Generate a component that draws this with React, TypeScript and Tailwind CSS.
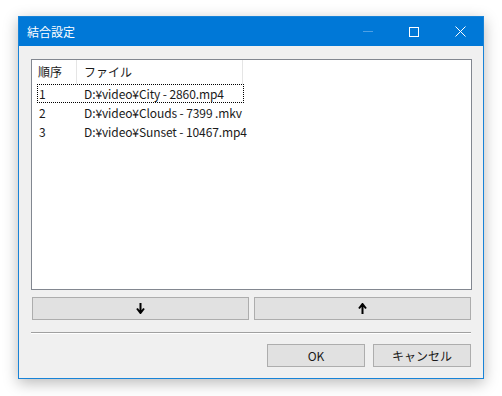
const rows = [
  { no: "1", file: "D:¥video¥City - 2860.mp4" },
  { no: "2", file: "D:¥video¥Clouds - 7399 .mkv" },
  { no: "3", file: "D:¥video¥Sunset - 10467.mp4" },
];

const font = { fontFamily: '"Noto Sans CJK JP", "Noto Sans", sans-serif' };

export default function App() {
  return (
    <div className="h-[396px] w-[502px] bg-white pl-[18px] pt-[16px] text-[12px] text-[#1a1a1a]" style={font}>
      <div className="flex h-[363px] w-[466px] flex-col border border-[#1883d7] bg-[#f0f0f0] shadow-[0_4px_14px_rgba(0,0,0,0.28)]">
        {/* title bar */}
        <div className="flex h-[29px] items-center bg-[#0078d7] pl-[8px] text-white">
          <span className="text-[12px]">結合設定</span>
          <div className="ml-auto flex h-full items-center">
            <div className="flex w-[46px] justify-center">
              <div className="h-px w-[10px] bg-[#4ea0e4]" />
            </div>
            <div className="flex w-[46px] justify-center">
              <div className="h-[10px] w-[10px] border border-white" />
            </div>
            <div className="flex w-[46px] justify-center">
              <svg width="11" height="11" viewBox="0 0 11 11">
                <path d="M0.5 0.5 L10.5 10.5 M10.5 0.5 L0.5 10.5" stroke="white" strokeWidth="1" />
              </svg>
            </div>
          </div>
        </div>

        <div className="flex flex-1 flex-col pl-[12px] pr-[11px] pt-[13px]">
          {/* list */}
          <div className="h-[231px] border border-[#828790] bg-white">
            <div className="flex h-[24px] items-center">
              <div className="flex h-full w-[45px] items-center border-r border-[#e5e5e5] pl-[6px]">順序</div>
              <div className="flex h-full w-[166px] items-center border-r border-[#e5e5e5] pl-[7px]">ファイル</div>
            </div>
            {rows.map((r, i) => (
              <div
                key={r.no}
                className={`ml-[5px] flex h-[19px] w-[207px] items-center ${i === 0 ? "border border-dotted border-black" : "border border-transparent"}`}
              >
                <div className="w-[45px] shrink-0 pl-[1px]">{r.no}</div>
                <div className="shrink-0 whitespace-nowrap pl-[1px] tracking-[-0.1px]">{r.file}</div>
              </div>
            ))}
          </div>

          {/* move buttons */}
          <div className="mt-[7px] flex gap-[5px] pl-px">
            <button className="flex h-[23px] w-[217px] items-center justify-center border border-[#adadad] bg-[#e1e1e1]">
              <svg width="9" height="11" viewBox="0 0 9 11">
                <path d="M4.5 0 V9 M1 5.5 L4.5 10 L8 5.5" stroke="black" strokeWidth="2" fill="none" />
              </svg>
            </button>
            <button className="flex h-[23px] w-[217px] items-center justify-center border border-[#adadad] bg-[#e1e1e1]">
              <svg width="9" height="11" viewBox="0 0 9 11">
                <path d="M4.5 11 V2 M1 5.5 L4.5 1 L8 5.5" stroke="black" strokeWidth="2" fill="none" />
              </svg>
            </button>
          </div>

          <div className="mt-[12px] h-px w-[440px] bg-[#a0a0a0]" />
          <div className="h-px w-[440px] bg-white" />

          <div className="mt-[10px] flex justify-end gap-[8px] pr-px">
            <button className="h-[23px] w-[98px] border border-[#adadad] bg-[#e1e1e1]">OK</button>
            <button className="h-[23px] w-[98px] border border-[#adadad] bg-[#e1e1e1]">キャンセル</button>
          </div>
        </div>
      </div>
    </div>
  );
}
